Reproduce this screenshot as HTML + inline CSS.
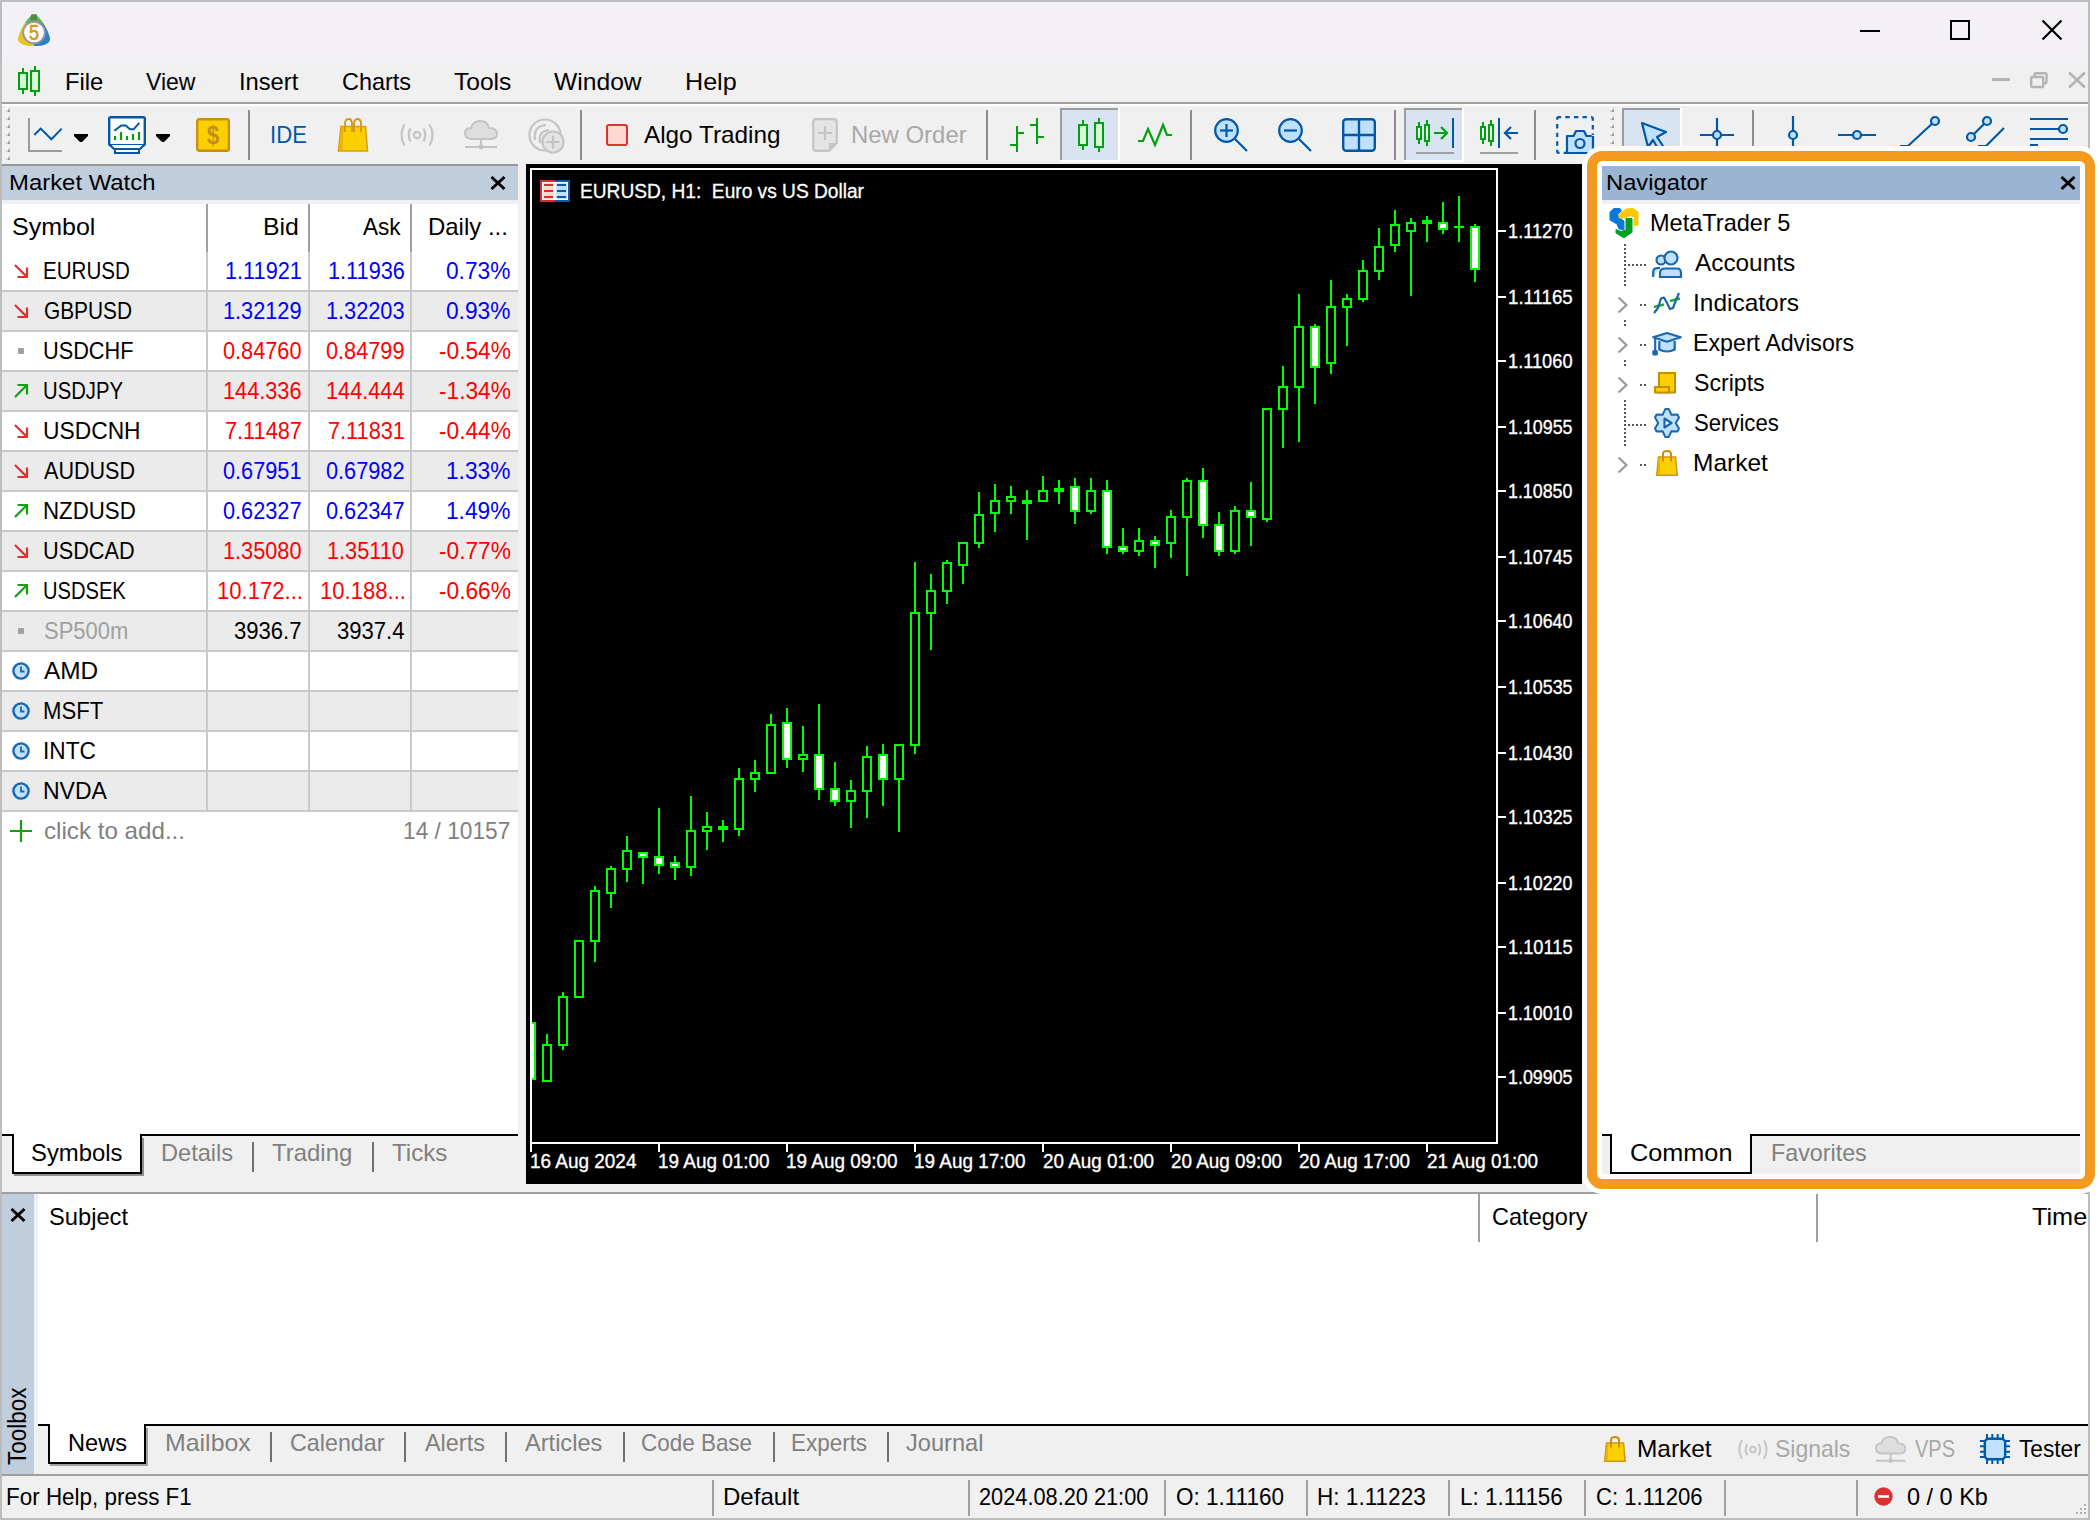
<!DOCTYPE html>
<html><head><meta charset="utf-8"><title>MetaTrader 5</title>
<style>
html,body{margin:0;padding:0;background:#fff;}
body{width:2100px;height:1520px;position:relative;overflow:hidden;font-family:"Liberation Sans",sans-serif;}
.t{position:absolute;white-space:pre;transform-origin:0 0;}
</style></head><body>
<div style="position:absolute;left:0px;top:0px;width:2090px;height:1520px;background:#f0f0f0;box-sizing:border-box;border:2px solid #bdbdbd;"></div>
<div style="position:absolute;left:2px;top:2px;width:2086px;height:60px;background:#f3f1f6;"></div>
<svg style="position:absolute;left:18px;top:14px;overflow:visible" width="32" height="32" viewBox="0 0 32 32" ><defs><clipPath id="cg"><rect x="0" y="0" width="32" height="9"/></clipPath><clipPath id="cy"><polygon points="0,9 9,9 16,20 16,32 0,32"/></clipPath><clipPath id="cb"><polygon points="32,9 23,9 16,20 16,32 32,32"/></clipPath></defs>
<path id="tri" d="M16 0 C21 1 30 15 32 24 C32.500 30 26 32 16 32 C6 32 -0.5 30 0 24 C2 15 11 1 16 0Z" fill="#58b858" clip-path="url(#cg)"/>
<path d="M16 0 C21 1 30 15 32 24 C32.500 30 26 32 16 32 C6 32 -0.5 30 0 24 C2 15 11 1 16 0Z" fill="#e8c428" clip-path="url(#cy)"/>
<path d="M16 0 C21 1 30 15 32 24 C32.500 30 26 32 16 32 C6 32 -0.5 30 0 24 C2 15 11 1 16 0Z" fill="#2c80c8" clip-path="url(#cb)"/>
<rect x="13" y="0.5" width="6" height="6" fill="#4c8c3c"/>
<circle cx="16" cy="18.500" r="10.800" fill="#fff" stroke="#989898" stroke-width="1.9"/>
<text x="0" y="0" transform="translate(16,26) scale(0.82,1)" font-size="22" text-anchor="middle" fill="#d8981c" stroke="#d8981c" stroke-width="0.7" font-family="Liberation Sans, sans-serif">5</text></svg>
<div style="position:absolute;left:1860px;top:30px;width:20px;height:2px;background:#000;"></div>
<div style="position:absolute;left:1950px;top:20px;width:20px;height:20px;background:transparent;box-sizing:border-box;border:2px solid #000;"></div>
<svg style="position:absolute;left:2042px;top:20px;overflow:visible" width="20" height="20" viewBox="0 0 20 20" ><path d="M0.5 0.5 L19.5 19.5 M19.5 0.5 L0.5 19.5" stroke="#000" stroke-width="2.2" fill="none"/></svg>
<div style="position:absolute;left:1992px;top:78px;width:18px;height:3px;background:#b4b4b4;"></div>
<svg style="position:absolute;left:2030px;top:72px;overflow:visible" width="18" height="16" viewBox="0 0 18 16" ><rect x="4.5" y="1.2" width="12" height="10" rx="1.5" fill="none" stroke="#b4b4b4" stroke-width="2.4"/><rect x="1.2" y="5" width="12" height="10" rx="1" fill="#f0f0f0" stroke="#b4b4b4" stroke-width="2.4"/></svg>
<svg style="position:absolute;left:2068px;top:72px;overflow:visible" width="18" height="16" viewBox="0 0 18 16" ><path d="M1 0.5 L17 15.5 M17 0.5 L1 15.5" stroke="#b4b4b4" stroke-width="2.6" fill="none"/></svg>
<svg style="position:absolute;left:18px;top:66px;overflow:visible" width="22" height="30" viewBox="0 0 22 30" >
<rect x="4" y="2" width="2" height="26" fill="#00a010"/><rect x="16" y="0" width="2" height="30" fill="#00a010"/>
<rect x="1" y="7" width="8" height="16" fill="#d8f8d8" stroke="#00a010" stroke-width="2"/>
<rect x="13" y="5" width="8" height="20" fill="#d8f8d8" stroke="#00a010" stroke-width="2"/></svg>
<div class="t" style="left:65.10px;top:69.68px;font-size:24px;line-height:24px;color:#000;transform:scaleX(0.9899)">File</div>
<div class="t" style="left:146.48px;top:69.68px;font-size:24px;line-height:24px;color:#000;transform:scaleX(0.9596)">View</div>
<div class="t" style="left:238.87px;top:69.68px;font-size:24px;line-height:24px;color:#000;transform:scaleX(0.9875)">Insert</div>
<div class="t" style="left:341.83px;top:69.68px;font-size:24px;line-height:24px;color:#000;transform:scaleX(0.9761)">Charts</div>
<div class="t" style="left:453.51px;top:69.68px;font-size:24px;line-height:24px;color:#000;transform:scaleX(1.0234)">Tools</div>
<div class="t" style="left:554.28px;top:69.68px;font-size:24px;line-height:24px;color:#000;transform:scaleX(1.0267)">Window</div>
<div class="t" style="left:684.99px;top:69.68px;font-size:24px;line-height:24px;color:#000;transform:scaleX(1.0465)">Help</div>
<div style="position:absolute;left:2px;top:102px;width:2086px;height:2px;background:#a0a0a0;"></div>
<div style="position:absolute;left:2px;top:104px;width:2086px;height:2px;background:#fff;"></div>
<div style="position:absolute;left:6px;top:108px;width:4px;height:4px;background:#fbfbfb;"></div>
<div style="position:absolute;left:8px;top:108px;width:2px;height:2px;background:#cfcfcf;"></div>
<div style="position:absolute;left:6px;top:110px;width:2px;height:2px;background:#cfcfcf;"></div>
<div style="position:absolute;left:8px;top:110px;width:2px;height:2px;background:#9c9c9c;"></div>
<div style="position:absolute;left:6px;top:116px;width:4px;height:4px;background:#fbfbfb;"></div>
<div style="position:absolute;left:8px;top:116px;width:2px;height:2px;background:#cfcfcf;"></div>
<div style="position:absolute;left:6px;top:118px;width:2px;height:2px;background:#cfcfcf;"></div>
<div style="position:absolute;left:8px;top:118px;width:2px;height:2px;background:#9c9c9c;"></div>
<div style="position:absolute;left:6px;top:124px;width:4px;height:4px;background:#fbfbfb;"></div>
<div style="position:absolute;left:8px;top:124px;width:2px;height:2px;background:#cfcfcf;"></div>
<div style="position:absolute;left:6px;top:126px;width:2px;height:2px;background:#cfcfcf;"></div>
<div style="position:absolute;left:8px;top:126px;width:2px;height:2px;background:#9c9c9c;"></div>
<div style="position:absolute;left:6px;top:132px;width:4px;height:4px;background:#fbfbfb;"></div>
<div style="position:absolute;left:8px;top:132px;width:2px;height:2px;background:#cfcfcf;"></div>
<div style="position:absolute;left:6px;top:134px;width:2px;height:2px;background:#cfcfcf;"></div>
<div style="position:absolute;left:8px;top:134px;width:2px;height:2px;background:#9c9c9c;"></div>
<div style="position:absolute;left:6px;top:140px;width:4px;height:4px;background:#fbfbfb;"></div>
<div style="position:absolute;left:8px;top:140px;width:2px;height:2px;background:#cfcfcf;"></div>
<div style="position:absolute;left:6px;top:142px;width:2px;height:2px;background:#cfcfcf;"></div>
<div style="position:absolute;left:8px;top:142px;width:2px;height:2px;background:#9c9c9c;"></div>
<div style="position:absolute;left:6px;top:148px;width:4px;height:4px;background:#fbfbfb;"></div>
<div style="position:absolute;left:8px;top:148px;width:2px;height:2px;background:#cfcfcf;"></div>
<div style="position:absolute;left:6px;top:150px;width:2px;height:2px;background:#cfcfcf;"></div>
<div style="position:absolute;left:8px;top:150px;width:2px;height:2px;background:#9c9c9c;"></div>
<div style="position:absolute;left:6px;top:156px;width:4px;height:4px;background:#fbfbfb;"></div>
<div style="position:absolute;left:8px;top:156px;width:2px;height:2px;background:#cfcfcf;"></div>
<div style="position:absolute;left:6px;top:158px;width:2px;height:2px;background:#cfcfcf;"></div>
<div style="position:absolute;left:8px;top:158px;width:2px;height:2px;background:#9c9c9c;"></div>
<div style="position:absolute;left:1610px;top:108px;width:4px;height:4px;background:#fbfbfb;"></div>
<div style="position:absolute;left:1612px;top:108px;width:2px;height:2px;background:#cfcfcf;"></div>
<div style="position:absolute;left:1610px;top:110px;width:2px;height:2px;background:#cfcfcf;"></div>
<div style="position:absolute;left:1612px;top:110px;width:2px;height:2px;background:#9c9c9c;"></div>
<div style="position:absolute;left:1610px;top:116px;width:4px;height:4px;background:#fbfbfb;"></div>
<div style="position:absolute;left:1612px;top:116px;width:2px;height:2px;background:#cfcfcf;"></div>
<div style="position:absolute;left:1610px;top:118px;width:2px;height:2px;background:#cfcfcf;"></div>
<div style="position:absolute;left:1612px;top:118px;width:2px;height:2px;background:#9c9c9c;"></div>
<div style="position:absolute;left:1610px;top:124px;width:4px;height:4px;background:#fbfbfb;"></div>
<div style="position:absolute;left:1612px;top:124px;width:2px;height:2px;background:#cfcfcf;"></div>
<div style="position:absolute;left:1610px;top:126px;width:2px;height:2px;background:#cfcfcf;"></div>
<div style="position:absolute;left:1612px;top:126px;width:2px;height:2px;background:#9c9c9c;"></div>
<div style="position:absolute;left:1610px;top:132px;width:4px;height:4px;background:#fbfbfb;"></div>
<div style="position:absolute;left:1612px;top:132px;width:2px;height:2px;background:#cfcfcf;"></div>
<div style="position:absolute;left:1610px;top:134px;width:2px;height:2px;background:#cfcfcf;"></div>
<div style="position:absolute;left:1612px;top:134px;width:2px;height:2px;background:#9c9c9c;"></div>
<div style="position:absolute;left:1610px;top:140px;width:4px;height:4px;background:#fbfbfb;"></div>
<div style="position:absolute;left:1612px;top:140px;width:2px;height:2px;background:#cfcfcf;"></div>
<div style="position:absolute;left:1610px;top:142px;width:2px;height:2px;background:#cfcfcf;"></div>
<div style="position:absolute;left:1612px;top:142px;width:2px;height:2px;background:#9c9c9c;"></div>
<div style="position:absolute;left:248px;top:110px;width:2px;height:50px;background:#8c8c8c;"></div>
<div style="position:absolute;left:580px;top:110px;width:2px;height:50px;background:#8c8c8c;"></div>
<div style="position:absolute;left:986px;top:110px;width:2px;height:50px;background:#8c8c8c;"></div>
<div style="position:absolute;left:1190px;top:110px;width:2px;height:50px;background:#8c8c8c;"></div>
<div style="position:absolute;left:1394px;top:110px;width:2px;height:50px;background:#8c8c8c;"></div>
<div style="position:absolute;left:1534px;top:110px;width:2px;height:50px;background:#8c8c8c;"></div>
<div style="position:absolute;left:1752px;top:110px;width:2px;height:50px;background:#8c8c8c;"></div>
<svg style="position:absolute;left:28px;top:116px;overflow:visible" width="36" height="38" viewBox="0 0 36 38" ><path d="M1 2 V35 H34" fill="none" stroke="#9a9a9a" stroke-width="2"/><path d="M6.3 19 L12.700 12.600 L23.400 23.300 L33.700 12.600" fill="none" stroke="#0058a8" stroke-width="2"/></svg>
<svg style="position:absolute;left:74px;top:134px;overflow:visible" width="14" height="8" viewBox="0 0 14 8" ><path d="M0 0 H14 V2 L8 8 H6 L0 2Z" fill="#000"/></svg>
<svg style="position:absolute;left:156px;top:134px;overflow:visible" width="14" height="8" viewBox="0 0 14 8" ><path d="M0 0 H14 V2 L8 8 H6 L0 2Z" fill="#000"/></svg>
<svg style="position:absolute;left:108px;top:116px;overflow:visible" width="38" height="38" viewBox="0 0 38 38" ><rect x="1.2" y="1.2" width="35.6" height="28" rx="1.5" fill="#fff" stroke="#0058a8" stroke-width="2.4"/>
<path d="M2 29 L6 33 H32 L36 29" fill="#fff" stroke="#0058a8" stroke-width="2.2"/>
<rect x="7" y="33" width="24" height="4" fill="#fff" stroke="#0058a8" stroke-width="2"/>
<path d="M6.3 14.700 L13.400 9.4 L17.700 9.4 L22 13.300 L25.600 13.300 L31.300 6.9" fill="none" stroke="#0058a8" stroke-width="2"/>
<path d="M7 24 V20 M13 24 V16 M19 24 V20 M25 24 V18 M31 24 V16" stroke="#00a010" stroke-width="2.2"/></svg>
<svg style="position:absolute;left:196px;top:118px;overflow:visible" width="34" height="34" viewBox="0 0 34 34" ><rect x="1.2" y="1.2" width="31.6" height="31.6" rx="2" fill="#fcd000" stroke="#c89010" stroke-width="2.4"/>
<text x="0" y="0" transform="translate(17,26) scale(0.9,1)" font-size="25" font-weight="bold" text-anchor="middle" fill="#c09018" font-family="Liberation Sans, sans-serif">$</text></svg>
<div class="t" style="left:270.01px;top:123.38px;font-size:24px;line-height:24px;color:#0058a8;transform:scaleX(0.9229)">IDE</div>
<svg style="position:absolute;left:338px;top:118px;overflow:visible" width="30.0" height="34.0" viewBox="0 0 30.0 34.0" ><g transform="scale(1.0)"><path d="M3 8.5 H27.500 L29.500 33 H0.5Z" fill="#fcd000" stroke="#d8a010" stroke-width="1.6"/><path d="M3 9.5 L1.5 32 H4.500 L5.5 9.500Z" fill="#e8b408"/>
<path d="M7 14 V6 Q7 1 10.500 1 Q14 1 14 6 V14 M16 14 V6 Q16 1 19.500 1 Q23 1 23 6 V14" fill="none" stroke="#d09810" stroke-width="1.8"/></g></svg>
<svg style="position:absolute;left:400px;top:123px;overflow:visible" width="34.0" height="24.0" viewBox="0 0 34.0 24.0" ><g transform="scale(1.0)" fill="none" stroke="#c4c4c4" stroke-width="2.2"><circle cx="17" cy="12" r="3.2"/>
<path d="M10.5 5.5 Q7 12 10.5 18.5 M23.5 5.5 Q27 12 23.5 18.5 M4.5 1.5 Q-1.5 12 4.5 22.5 M29.5 1.5 Q35.500 12 29.5 22.5"/></g></svg>
<svg style="position:absolute;left:464px;top:120px;overflow:visible" width="34.0" height="30.0" viewBox="0 0 34.0 30.0" ><g transform="scale(1.0)"><path d="M8 19 Q1 19 1 13 Q1 8 7 8 Q9 1 16 1 Q24 1 25 8 Q33 8 33 14 Q33 19 26 19Z" fill="#dedede" stroke="#c4c4c4" stroke-width="2"/>
<path d="M17 19 V27 M1 27 H33" stroke="#c4c4c4" stroke-width="2.2" fill="none"/><circle cx="17" cy="27" r="2.4" fill="#c4c4c4"/></g></svg>
<svg style="position:absolute;left:528px;top:118px;overflow:visible" width="37" height="36" viewBox="0 0 37 36" ><g fill="none" stroke="#c4c4c4" stroke-width="2.2"><circle cx="17" cy="17" r="15.5"/><path d="M7 22 Q5 8 18 7 M12 25 Q10 13 21 12"/>
<circle cx="25" cy="24" r="10.5" fill="#e4e4e4"/><path d="M25 17.5 V30.5 M18.5 24 H31.500"/></g></svg>
<div style="position:absolute;left:606px;top:124px;width:22px;height:22px;background:#ffd8d0;box-sizing:border-box;border:2px solid #e03030;border-radius:3px;"></div>
<div class="t" style="left:644.20px;top:123.38px;font-size:24px;line-height:24px;color:#000;transform:scaleX(1.0126)">Algo Trading</div>
<svg style="position:absolute;left:812px;top:118px;overflow:visible" width="26" height="34" viewBox="0 0 26 34" ><path d="M4 1.2 H22 Q24.800 1.2 24.800 4 V25 L17 32.800 H4 Q1.2 32.800 1.2 30 V4 Q1.2 1.2 4 1.2Z" fill="#e4e4e4" stroke="#c4c4c4" stroke-width="2.2"/>
<path d="M17 32 V25 H24.500Z" fill="#c4c4c4"/><path d="M13 8 V22 M6 15 H20" stroke="#c4c4c4" stroke-width="2.2"/></svg>
<div class="t" style="left:851.39px;top:123.38px;font-size:24px;line-height:24px;color:#a8a8a8;transform:scaleX(0.9968)">New Order</div>
<svg style="position:absolute;left:1010px;top:118px;overflow:visible" width="34" height="34" viewBox="0 0 34 34" ><g fill="#00a010"><rect x="6" y="8" width="2" height="26"/><rect x="0" y="26" width="7" height="2"/><rect x="7" y="14" width="7" height="2"/><rect x="26" y="0" width="2" height="26"/><rect x="20" y="6" width="7" height="2"/><rect x="27" y="18" width="7" height="2"/></g></svg>
<div style="position:absolute;left:1060px;top:108px;width:58px;height:52px;background:#d8e4f2;"></div>
<div style="position:absolute;left:1060px;top:108px;width:58px;height:2px;background:#9c9c9c;"></div>
<div style="position:absolute;left:1060px;top:108px;width:2px;height:52px;background:#9c9c9c;"></div>
<div style="position:absolute;left:1060px;top:160px;width:60px;height:2px;background:#fff;"></div>
<div style="position:absolute;left:1118px;top:108px;width:2px;height:54px;background:#fff;"></div>
<svg style="position:absolute;left:1078px;top:118px;overflow:visible" width="28" height="34" viewBox="0 0 28 34" ><rect x="4" y="2" width="2" height="30" fill="#00a010"/><rect x="20" y="0" width="2" height="34" fill="#00a010"/>
<rect x="1" y="7" width="8" height="20" fill="#d8f8d8" stroke="#00a010" stroke-width="2"/><rect x="17" y="5" width="8" height="24" fill="#d8f8d8" stroke="#00a010" stroke-width="2"/></svg>
<svg style="position:absolute;left:1138px;top:124px;overflow:visible" width="34" height="22" viewBox="0 0 34 22" ><path d="M0 17 H5 L10 5 L17 21 L25 1 L29 11 H34" fill="none" stroke="#00a010" stroke-width="2.2"/></svg>
<svg style="position:absolute;left:1214px;top:118px;overflow:visible" width="34" height="34" viewBox="0 0 34 34" ><g fill="none" stroke="#0058a8" stroke-width="2.2"><circle cx="12.500" cy="12.500" r="11.3" fill="#c0e0ff"/><path d="M6 12.500 H19"/><path d="M12.500 6 V19" /><path d="M21 21 L33 33"/></g></svg>
<svg style="position:absolute;left:1278px;top:118px;overflow:visible" width="34" height="34" viewBox="0 0 34 34" ><g fill="none" stroke="#0058a8" stroke-width="2.2"><circle cx="12.500" cy="12.500" r="11.3" fill="#c0e0ff"/><path d="M6 12.500 H19"/><path d="M21 21 L33 33"/></g></svg>
<svg style="position:absolute;left:1342px;top:118px;overflow:visible" width="34" height="34" viewBox="0 0 34 34" ><rect x="1.2" y="1.2" width="31.6" height="31.6" rx="3" fill="#c0e0ff" stroke="#0058a8" stroke-width="2.4"/><path d="M17 1 V33 M1 17 H33" stroke="#0058a8" stroke-width="2.4"/></svg>
<div style="position:absolute;left:1404px;top:108px;width:58px;height:52px;background:#d8e4f2;"></div>
<div style="position:absolute;left:1404px;top:108px;width:58px;height:2px;background:#9c9c9c;"></div>
<div style="position:absolute;left:1404px;top:108px;width:2px;height:52px;background:#9c9c9c;"></div>
<div style="position:absolute;left:1404px;top:160px;width:60px;height:2px;background:#fff;"></div>
<div style="position:absolute;left:1462px;top:108px;width:2px;height:54px;background:#fff;"></div>
<svg style="position:absolute;left:1416px;top:118px;overflow:visible" width="38" height="36" viewBox="0 0 38 36" ><g transform="translate(0,0)"><rect x="2" y="4" width="2" height="22" fill="#00a010"/><rect x="10" y="2" width="2" height="26" fill="#00a010"/>
<rect x="1" y="9" width="4" height="12" fill="#e8ffe8" stroke="#00a010" stroke-width="2"/><rect x="9" y="7" width="4" height="16" fill="#e8ffe8" stroke="#00a010" stroke-width="2"/></g><path d="M18 15 H31 M25 9 L31 15 L25 21" fill="none" stroke="#00a010" stroke-width="2.2"/><rect x="36" y="0" width="2" height="30" fill="#0058a8"/><rect x="0" y="34" width="38" height="2" fill="#a0a0a0"/></svg>
<svg style="position:absolute;left:1480px;top:118px;overflow:visible" width="38" height="36" viewBox="0 0 38 36" ><g transform="translate(0,0)"><rect x="2" y="4" width="2" height="22" fill="#00a010"/><rect x="10" y="2" width="2" height="26" fill="#00a010"/>
<rect x="1" y="9" width="4" height="12" fill="#e8ffe8" stroke="#00a010" stroke-width="2"/><rect x="9" y="7" width="4" height="16" fill="#e8ffe8" stroke="#00a010" stroke-width="2"/></g><rect x="18" y="0" width="2" height="30" fill="#0058a8"/><path d="M38 15 H25 M31 9 L25 15 L31 21" fill="none" stroke="#0058a8" stroke-width="2.2"/><rect x="0" y="34" width="38" height="2" fill="#a0a0a0"/></svg>
<svg style="position:absolute;left:1556px;top:116px;overflow:visible" width="38" height="38" viewBox="0 0 38 38" ><rect x="1.2" y="1.2" width="35.6" height="35.6" rx="1.5" fill="none" stroke="#0058a8" stroke-width="2.2" stroke-dasharray="4.4 4.2" stroke-dashoffset="2"/>
<path d="M11 20 H17.500 L20 15 H28 L30.500 20 H37 V37 H11Z" fill="#c0e0ff" stroke="#0058a8" stroke-width="2.2" stroke-linejoin="round"/><rect x="35.800" y="19" width="3" height="19.200" fill="#f0f0f0"/><path d="M37 20 V37" stroke="#0058a8" stroke-width="2.2"/><circle cx="24" cy="27.500" r="4.500" fill="none" stroke="#0058a8" stroke-width="2.2"/></svg>
<div style="position:absolute;left:1622px;top:108px;width:58px;height:52px;background:#d8e4f2;"></div>
<div style="position:absolute;left:1622px;top:108px;width:58px;height:2px;background:#9c9c9c;"></div>
<div style="position:absolute;left:1622px;top:108px;width:2px;height:52px;background:#9c9c9c;"></div>
<div style="position:absolute;left:1622px;top:160px;width:60px;height:2px;background:#fff;"></div>
<div style="position:absolute;left:1680px;top:108px;width:2px;height:54px;background:#fff;"></div>
<svg style="position:absolute;left:1640px;top:122px;overflow:visible" width="28" height="30" viewBox="0 0 28 30" ><path d="M2 1 L26 10 L17 15 L25 27 L20 30 L13 18 L8 25Z" fill="#c0e0ff" stroke="#0058a8" stroke-width="2.2" stroke-linejoin="round"/></svg>
<svg style="position:absolute;left:1700px;top:118px;overflow:visible" width="34" height="34" viewBox="0 0 34 34" ><path d="M17 0 V34 M0 17 H34" stroke="#0058a8" stroke-width="2.2"/><circle cx="17" cy="17" r="4" fill="#c0e0ff" stroke="#0058a8" stroke-width="2.2"/></svg>
<svg style="position:absolute;left:1787px;top:116px;overflow:visible" width="12" height="38" viewBox="0 0 12 38" ><path d="M6 0 V38" stroke="#0058a8" stroke-width="2.2"/><circle cx="6" cy="19" r="4" fill="#c0e0ff" stroke="#0058a8" stroke-width="2.2"/></svg>
<svg style="position:absolute;left:1838px;top:129px;overflow:visible" width="38" height="12" viewBox="0 0 38 12" ><path d="M0 6 H38" stroke="#0058a8" stroke-width="2.2"/><circle cx="19" cy="6" r="4" fill="#c0e0ff" stroke="#0058a8" stroke-width="2.2"/></svg>
<svg style="position:absolute;left:1900px;top:116px;overflow:visible" width="40" height="38" viewBox="0 0 40 38" ><path d="M0 30 H8 L35 5" fill="none" stroke="#0058a8" stroke-width="2.2"/><circle cx="35" cy="5" r="4" fill="#c0e0ff" stroke="#0058a8" stroke-width="2.2"/></svg>
<svg style="position:absolute;left:1964px;top:116px;overflow:visible" width="44" height="38" viewBox="0 0 44 38" ><path d="M7 21 L23 5 M14 30 H22 L40 12" fill="none" stroke="#0058a8" stroke-width="2.2"/><circle cx="7" cy="21" r="4" fill="#c0e0ff" stroke="#0058a8" stroke-width="2.2"/><circle cx="23" cy="5" r="4" fill="#c0e0ff" stroke="#0058a8" stroke-width="2.2"/></svg>
<svg style="position:absolute;left:2030px;top:116px;overflow:visible" width="40" height="38" viewBox="0 0 40 38" ><path d="M0 3 H38 M0 13 H30 M0 23 H38 M0 29 H8" stroke="#0058a8" stroke-width="2.2"/><circle cx="33" cy="13" r="4" fill="#c0e0ff" stroke="#0058a8" stroke-width="2.2"/></svg>
<div style="position:absolute;left:2px;top:164px;width:516px;height:2px;background:#9a9a9a;"></div>
<div style="position:absolute;left:2px;top:166px;width:516px;height:34px;background:#c0cddc;"></div>
<div style="position:absolute;left:2px;top:200px;width:516px;height:4px;background:#f0f0f0;"></div>
<div style="position:absolute;left:2px;top:204px;width:516px;height:930px;background:#fff;"></div>
<div class="t" style="left:8.59px;top:173.40px;font-size:21.5px;line-height:21.5px;color:#000;transform:scaleX(1.1113)">Market Watch</div>
<svg style="position:absolute;left:490px;top:176px;overflow:visible" width="16" height="14" viewBox="0 0 16 14" ><path d="M1.5 1 L14.500 13 M14.500 1 L1.5 13" stroke="#000" stroke-width="3" fill="none"/></svg>
<div style="position:absolute;left:2px;top:290px;width:516px;height:2px;background:#c8c8c8;"></div>
<div style="position:absolute;left:2px;top:292px;width:516px;height:38px;background:#ebebeb;"></div>
<div style="position:absolute;left:2px;top:330px;width:516px;height:2px;background:#c8c8c8;"></div>
<div style="position:absolute;left:2px;top:370px;width:516px;height:2px;background:#c8c8c8;"></div>
<div style="position:absolute;left:2px;top:372px;width:516px;height:38px;background:#ebebeb;"></div>
<div style="position:absolute;left:2px;top:410px;width:516px;height:2px;background:#c8c8c8;"></div>
<div style="position:absolute;left:2px;top:450px;width:516px;height:2px;background:#c8c8c8;"></div>
<div style="position:absolute;left:2px;top:452px;width:516px;height:38px;background:#ebebeb;"></div>
<div style="position:absolute;left:2px;top:490px;width:516px;height:2px;background:#c8c8c8;"></div>
<div style="position:absolute;left:2px;top:530px;width:516px;height:2px;background:#c8c8c8;"></div>
<div style="position:absolute;left:2px;top:532px;width:516px;height:38px;background:#ebebeb;"></div>
<div style="position:absolute;left:2px;top:570px;width:516px;height:2px;background:#c8c8c8;"></div>
<div style="position:absolute;left:2px;top:610px;width:516px;height:2px;background:#c8c8c8;"></div>
<div style="position:absolute;left:2px;top:612px;width:516px;height:38px;background:#ebebeb;"></div>
<div style="position:absolute;left:2px;top:650px;width:516px;height:2px;background:#c8c8c8;"></div>
<div style="position:absolute;left:2px;top:690px;width:516px;height:2px;background:#c8c8c8;"></div>
<div style="position:absolute;left:2px;top:692px;width:516px;height:38px;background:#ebebeb;"></div>
<div style="position:absolute;left:2px;top:730px;width:516px;height:2px;background:#c8c8c8;"></div>
<div style="position:absolute;left:2px;top:770px;width:516px;height:2px;background:#c8c8c8;"></div>
<div style="position:absolute;left:2px;top:772px;width:516px;height:38px;background:#ebebeb;"></div>
<div style="position:absolute;left:2px;top:810px;width:516px;height:2px;background:#c8c8c8;"></div>
<div style="position:absolute;left:206px;top:204px;width:2px;height:48px;background:#a0a0a0;"></div>
<div style="position:absolute;left:206px;top:252px;width:2px;height:560px;background:#c8c8c8;"></div>
<div style="position:absolute;left:308px;top:204px;width:2px;height:48px;background:#a0a0a0;"></div>
<div style="position:absolute;left:308px;top:252px;width:2px;height:560px;background:#c8c8c8;"></div>
<div style="position:absolute;left:410px;top:204px;width:2px;height:48px;background:#a0a0a0;"></div>
<div style="position:absolute;left:410px;top:252px;width:2px;height:560px;background:#c8c8c8;"></div>
<div class="t" style="left:12.47px;top:215.18px;font-size:24px;line-height:24px;color:#000;transform:scaleX(1.0417)">Symbol</div>
<div class="t" style="left:262.71px;top:215.18px;font-size:24px;line-height:24px;color:#000;transform:scaleX(1.0345)">Bid</div>
<div class="t" style="left:362.60px;top:215.18px;font-size:24px;line-height:24px;color:#000;transform:scaleX(0.9409)">Ask</div>
<div class="t" style="left:427.78px;top:215.18px;font-size:24px;line-height:24px;color:#000;transform:scaleX(0.9979)">Daily ...</div>
<svg style="position:absolute;left:14px;top:264px;overflow:visible" width="14" height="14" viewBox="0 0 14 14" ><path d="M1 1 L12 12 M3.5 13 H13 V3.5" fill="none" stroke="#e03030" stroke-width="2.2"/></svg>
<div class="t" style="left:42.96px;top:259.48px;font-size:24px;line-height:24px;color:#000;transform:scaleX(0.8567)">EURUSD</div>
<div class="t" style="left:224.69px;top:259.48px;font-size:24px;line-height:24px;color:#0000ff;transform:scaleX(0.9050)">1.11921</div>
<div class="t" style="left:327.58px;top:259.48px;font-size:24px;line-height:24px;color:#0000ff;transform:scaleX(0.9050)">1.11936</div>
<div class="t" style="left:446.30px;top:259.48px;font-size:24px;line-height:24px;color:#0000ff;transform:scaleX(0.9450)">0.73%</div>
<svg style="position:absolute;left:14px;top:304px;overflow:visible" width="14" height="14" viewBox="0 0 14 14" ><path d="M1 1 L12 12 M3.5 13 H13 V3.5" fill="none" stroke="#e03030" stroke-width="2.2"/></svg>
<div class="t" style="left:43.96px;top:299.48px;font-size:24px;line-height:24px;color:#000;transform:scaleX(0.8687)">GBPUSD</div>
<div class="t" style="left:223.06px;top:299.48px;font-size:24px;line-height:24px;color:#0000ff;transform:scaleX(0.9050)">1.32129</div>
<div class="t" style="left:325.95px;top:299.48px;font-size:24px;line-height:24px;color:#0000ff;transform:scaleX(0.9050)">1.32203</div>
<div class="t" style="left:446.30px;top:299.48px;font-size:24px;line-height:24px;color:#0000ff;transform:scaleX(0.9450)">0.93%</div>
<div style="position:absolute;left:18px;top:348px;width:6px;height:6px;background:#a0a0a0;border-radius:1px;"></div>
<div class="t" style="left:43.37px;top:339.48px;font-size:24px;line-height:24px;color:#000;transform:scaleX(0.9053)">USDCHF</div>
<div class="t" style="left:222.84px;top:339.48px;font-size:24px;line-height:24px;color:#ff0000;transform:scaleX(0.9050)">0.84760</div>
<div class="t" style="left:326.06px;top:339.48px;font-size:24px;line-height:24px;color:#ff0000;transform:scaleX(0.9050)">0.84799</div>
<div class="t" style="left:438.70px;top:339.48px;font-size:24px;line-height:24px;color:#ff0000;transform:scaleX(0.9450)">-0.54%</div>
<svg style="position:absolute;left:14px;top:384px;overflow:visible" width="14" height="14" viewBox="0 0 14 14" ><path d="M1 13 L12 2 M3.5 1 H13 V10.500" fill="none" stroke="#10a010" stroke-width="2.2"/></svg>
<div class="t" style="left:43.48px;top:379.48px;font-size:24px;line-height:24px;color:#000;transform:scaleX(0.8442)">USDJPY</div>
<div class="t" style="left:222.95px;top:379.48px;font-size:24px;line-height:24px;color:#ff0000;transform:scaleX(0.9050)">144.336</div>
<div class="t" style="left:325.63px;top:379.48px;font-size:24px;line-height:24px;color:#ff0000;transform:scaleX(0.9050)">144.444</div>
<div class="t" style="left:438.70px;top:379.48px;font-size:24px;line-height:24px;color:#ff0000;transform:scaleX(0.9450)">-1.34%</div>
<svg style="position:absolute;left:14px;top:424px;overflow:visible" width="14" height="14" viewBox="0 0 14 14" ><path d="M1 1 L12 12 M3.5 13 H13 V3.5" fill="none" stroke="#e03030" stroke-width="2.2"/></svg>
<div class="t" style="left:43.29px;top:419.48px;font-size:24px;line-height:24px;color:#000;transform:scaleX(0.9506)">USDCNH</div>
<div class="t" style="left:224.80px;top:419.48px;font-size:24px;line-height:24px;color:#ff0000;transform:scaleX(0.9050)">7.11487</div>
<div class="t" style="left:327.69px;top:419.48px;font-size:24px;line-height:24px;color:#ff0000;transform:scaleX(0.9050)">7.11831</div>
<div class="t" style="left:438.70px;top:419.48px;font-size:24px;line-height:24px;color:#ff0000;transform:scaleX(0.9450)">-0.44%</div>
<svg style="position:absolute;left:14px;top:464px;overflow:visible" width="14" height="14" viewBox="0 0 14 14" ><path d="M1 1 L12 12 M3.5 13 H13 V3.5" fill="none" stroke="#e03030" stroke-width="2.2"/></svg>
<div class="t" style="left:44.00px;top:459.48px;font-size:24px;line-height:24px;color:#000;transform:scaleX(0.8982)">AUDUSD</div>
<div class="t" style="left:223.06px;top:459.48px;font-size:24px;line-height:24px;color:#0000ff;transform:scaleX(0.9050)">0.67951</div>
<div class="t" style="left:326.17px;top:459.48px;font-size:24px;line-height:24px;color:#0000ff;transform:scaleX(0.9050)">0.67982</div>
<div class="t" style="left:446.30px;top:459.48px;font-size:24px;line-height:24px;color:#0000ff;transform:scaleX(0.9450)">1.33%</div>
<svg style="position:absolute;left:14px;top:504px;overflow:visible" width="14" height="14" viewBox="0 0 14 14" ><path d="M1 13 L12 2 M3.5 1 H13 V10.500" fill="none" stroke="#10a010" stroke-width="2.2"/></svg>
<div class="t" style="left:43.22px;top:499.48px;font-size:24px;line-height:24px;color:#000;transform:scaleX(0.9282)">NZDUSD</div>
<div class="t" style="left:223.17px;top:499.48px;font-size:24px;line-height:24px;color:#0000ff;transform:scaleX(0.9050)">0.62327</div>
<div class="t" style="left:326.17px;top:499.48px;font-size:24px;line-height:24px;color:#0000ff;transform:scaleX(0.9050)">0.62347</div>
<div class="t" style="left:446.30px;top:499.48px;font-size:24px;line-height:24px;color:#0000ff;transform:scaleX(0.9450)">1.49%</div>
<svg style="position:absolute;left:14px;top:544px;overflow:visible" width="14" height="14" viewBox="0 0 14 14" ><path d="M1 1 L12 12 M3.5 13 H13 V3.5" fill="none" stroke="#e03030" stroke-width="2.2"/></svg>
<div class="t" style="left:43.37px;top:539.48px;font-size:24px;line-height:24px;color:#000;transform:scaleX(0.9045)">USDCAD</div>
<div class="t" style="left:222.84px;top:539.48px;font-size:24px;line-height:24px;color:#ff0000;transform:scaleX(0.9050)">1.35080</div>
<div class="t" style="left:327.47px;top:539.48px;font-size:24px;line-height:24px;color:#ff0000;transform:scaleX(0.9050)">1.35110</div>
<div class="t" style="left:438.70px;top:539.48px;font-size:24px;line-height:24px;color:#ff0000;transform:scaleX(0.9450)">-0.77%</div>
<svg style="position:absolute;left:14px;top:584px;overflow:visible" width="14" height="14" viewBox="0 0 14 14" ><path d="M1 13 L12 2 M3.5 1 H13 V10.500" fill="none" stroke="#10a010" stroke-width="2.2"/></svg>
<div class="t" style="left:43.49px;top:579.48px;font-size:24px;line-height:24px;color:#000;transform:scaleX(0.8385)">USDSEK</div>
<div class="t" style="left:216.59px;top:579.48px;font-size:24px;line-height:24px;color:#ff0000;transform:scaleX(0.9200)">10.172...</div>
<div class="t" style="left:319.59px;top:579.48px;font-size:24px;line-height:24px;color:#ff0000;transform:scaleX(0.9200)">10.188...</div>
<div class="t" style="left:438.70px;top:579.48px;font-size:24px;line-height:24px;color:#ff0000;transform:scaleX(0.9450)">-0.66%</div>
<div style="position:absolute;left:18px;top:628px;width:6px;height:6px;background:#a0a0a0;border-radius:1px;"></div>
<div class="t" style="left:44.01px;top:619.48px;font-size:24px;line-height:24px;color:#a0a0a0;transform:scaleX(0.9160)">SP500m</div>
<div class="t" style="left:234.14px;top:619.48px;font-size:24px;line-height:24px;color:#000;transform:scaleX(0.9200)">3936.7</div>
<div class="t" style="left:336.59px;top:619.48px;font-size:24px;line-height:24px;color:#000;transform:scaleX(0.9200)">3937.4</div>
<svg style="position:absolute;left:12px;top:662px;overflow:visible" width="18" height="18" viewBox="0 0 18 18" ><circle cx="9" cy="9" r="7.6" fill="#c0e0ff" stroke="#1868b0" stroke-width="2.4"/><path d="M9 4.500 V9.5 H12.500" fill="none" stroke="#1868b0" stroke-width="1.8"/></svg>
<div class="t" style="left:44.00px;top:659.48px;font-size:24px;line-height:24px;color:#000;transform:scaleX(1.0153)">AMD</div>
<svg style="position:absolute;left:12px;top:702px;overflow:visible" width="18" height="18" viewBox="0 0 18 18" ><circle cx="9" cy="9" r="7.6" fill="#c0e0ff" stroke="#1868b0" stroke-width="2.4"/><path d="M9 4.500 V9.5 H12.500" fill="none" stroke="#1868b0" stroke-width="1.8"/></svg>
<div class="t" style="left:43.23px;top:699.48px;font-size:24px;line-height:24px;color:#000;transform:scaleX(0.9224)">MSFT</div>
<svg style="position:absolute;left:12px;top:742px;overflow:visible" width="18" height="18" viewBox="0 0 18 18" ><circle cx="9" cy="9" r="7.6" fill="#c0e0ff" stroke="#1868b0" stroke-width="2.4"/><path d="M9 4.500 V9.5 H12.500" fill="none" stroke="#1868b0" stroke-width="1.8"/></svg>
<div class="t" style="left:42.96px;top:739.48px;font-size:24px;line-height:24px;color:#000;transform:scaleX(0.9448)">INTC</div>
<svg style="position:absolute;left:12px;top:782px;overflow:visible" width="18" height="18" viewBox="0 0 18 18" ><circle cx="9" cy="9" r="7.6" fill="#c0e0ff" stroke="#1868b0" stroke-width="2.4"/><path d="M9 4.500 V9.5 H12.500" fill="none" stroke="#1868b0" stroke-width="1.8"/></svg>
<div class="t" style="left:43.16px;top:779.48px;font-size:24px;line-height:24px;color:#000;transform:scaleX(0.9586)">NVDA</div>
<svg style="position:absolute;left:10px;top:820px;overflow:visible" width="22" height="22" viewBox="0 0 22 22" ><path d="M11 0 V22 M0 11 H22" stroke="#10a010" stroke-width="2.2"/></svg>
<div class="t" style="left:44.03px;top:819.48px;font-size:24px;line-height:24px;color:#808080;transform:scaleX(1.0070)">click to add...</div>
<div class="t" style="left:403.30px;top:819.48px;font-size:24px;line-height:24px;color:#808080;transform:scaleX(0.9466)">14 / 10157</div>
<div style="position:absolute;left:2px;top:1136px;width:516px;height:56px;background:#f0f0f0;"></div>
<div style="position:absolute;left:2px;top:1134px;width:12px;height:2px;background:#000;"></div>
<div style="position:absolute;left:140px;top:1134px;width:378px;height:2px;background:#000;"></div>
<div style="position:absolute;left:12px;top:1134px;width:130px;height:38px;background:#fff;"></div>
<div style="position:absolute;left:12px;top:1134px;width:2px;height:40px;background:#000;"></div>
<div style="position:absolute;left:140px;top:1134px;width:2px;height:40px;background:#000;"></div>
<div style="position:absolute;left:12px;top:1172px;width:130px;height:2px;background:#000;"></div>
<div style="position:absolute;left:14px;top:1174px;width:130px;height:2px;background:#909090;"></div>
<div style="position:absolute;left:142px;top:1138px;width:2px;height:38px;background:#909090;"></div>
<div class="t" style="left:30.93px;top:1141.38px;font-size:24px;line-height:24px;color:#000;transform:scaleX(0.9942)">Symbols</div>
<div class="t" style="left:160.91px;top:1141.38px;font-size:24px;line-height:24px;color:#808080;transform:scaleX(0.9836)">Details</div>
<div class="t" style="left:272.12px;top:1141.38px;font-size:24px;line-height:24px;color:#808080;transform:scaleX(0.9975)">Trading</div>
<div class="t" style="left:391.52px;top:1141.38px;font-size:24px;line-height:24px;color:#808080;transform:scaleX(1.0045)">Ticks</div>
<div style="position:absolute;left:252px;top:1142px;width:2px;height:30px;background:#707070;"></div>
<div style="position:absolute;left:372px;top:1142px;width:2px;height:30px;background:#707070;"></div>
<div style="position:absolute;left:2px;top:1192px;width:2086px;height:2px;background:#a0a0a0;"></div>
<svg style="position:absolute;left:526px;top:164px;overflow:visible" width="1056" height="1020" viewBox="0 0 1056 1020" shape-rendering="crispEdges"><rect x="0" y="0" width="1056" height="1020" fill="#000"/><rect x="6" y="858" width="4" height="58" fill="#fff"/><rect x="8" y="858" width="2" height="58" fill="#00ff00"/><rect x="6" y="858" width="4" height="2" fill="#00ff00"/><rect x="6" y="914" width="4" height="2" fill="#00ff00"/><rect x="20" y="870" width="2" height="48" fill="#00ff00"/><rect x="16" y="880" width="10" height="38" fill="#00ff00"/><rect x="18" y="882" width="6" height="34" fill="#000"/><rect x="36" y="828" width="2" height="58" fill="#00ff00"/><rect x="32" y="832" width="10" height="50" fill="#00ff00"/><rect x="34" y="834" width="6" height="46" fill="#000"/><rect x="52" y="776" width="2" height="58" fill="#00ff00"/><rect x="48" y="776" width="10" height="58" fill="#00ff00"/><rect x="50" y="778" width="6" height="54" fill="#000"/><rect x="68" y="722" width="2" height="76" fill="#00ff00"/><rect x="64" y="726" width="10" height="52" fill="#00ff00"/><rect x="66" y="728" width="6" height="48" fill="#000"/><rect x="84" y="702" width="2" height="42" fill="#00ff00"/><rect x="80" y="704" width="10" height="26" fill="#00ff00"/><rect x="82" y="706" width="6" height="22" fill="#000"/><rect x="100" y="672" width="2" height="46" fill="#00ff00"/><rect x="96" y="686" width="10" height="20" fill="#00ff00"/><rect x="98" y="688" width="6" height="16" fill="#000"/><rect x="116" y="688" width="2" height="32" fill="#00ff00"/><rect x="112" y="688" width="10" height="6" fill="#00ff00"/><rect x="114" y="690" width="6" height="2" fill="#fff"/><rect x="132" y="644" width="2" height="66" fill="#00ff00"/><rect x="128" y="692" width="10" height="10" fill="#00ff00"/><rect x="130" y="694" width="6" height="6" fill="#fff"/><rect x="148" y="692" width="2" height="24" fill="#00ff00"/><rect x="144" y="698" width="10" height="6" fill="#00ff00"/><rect x="146" y="700" width="6" height="2" fill="#fff"/><rect x="164" y="632" width="2" height="80" fill="#00ff00"/><rect x="160" y="666" width="10" height="38" fill="#00ff00"/><rect x="162" y="668" width="6" height="34" fill="#000"/><rect x="180" y="648" width="2" height="38" fill="#00ff00"/><rect x="176" y="662" width="10" height="6" fill="#00ff00"/><rect x="178" y="664" width="6" height="2" fill="#000"/><rect x="196" y="656" width="2" height="22" fill="#00ff00"/><rect x="192" y="662" width="10" height="4" fill="#00ff00"/><rect x="212" y="604" width="2" height="68" fill="#00ff00"/><rect x="208" y="614" width="10" height="52" fill="#00ff00"/><rect x="210" y="616" width="6" height="48" fill="#000"/><rect x="228" y="596" width="2" height="32" fill="#00ff00"/><rect x="224" y="608" width="10" height="8" fill="#00ff00"/><rect x="226" y="610" width="6" height="4" fill="#000"/><rect x="244" y="550" width="2" height="60" fill="#00ff00"/><rect x="240" y="560" width="10" height="50" fill="#00ff00"/><rect x="242" y="562" width="6" height="46" fill="#000"/><rect x="260" y="544" width="2" height="60" fill="#00ff00"/><rect x="256" y="558" width="10" height="38" fill="#00ff00"/><rect x="258" y="560" width="6" height="34" fill="#fff"/><rect x="276" y="562" width="2" height="46" fill="#00ff00"/><rect x="272" y="590" width="10" height="6" fill="#00ff00"/><rect x="274" y="592" width="6" height="2" fill="#000"/><rect x="292" y="540" width="2" height="96" fill="#00ff00"/><rect x="288" y="590" width="10" height="36" fill="#00ff00"/><rect x="290" y="592" width="6" height="32" fill="#fff"/><rect x="308" y="598" width="2" height="44" fill="#00ff00"/><rect x="304" y="624" width="10" height="14" fill="#00ff00"/><rect x="306" y="626" width="6" height="10" fill="#fff"/><rect x="324" y="616" width="2" height="48" fill="#00ff00"/><rect x="320" y="626" width="10" height="12" fill="#00ff00"/><rect x="322" y="628" width="6" height="8" fill="#000"/><rect x="340" y="582" width="2" height="72" fill="#00ff00"/><rect x="336" y="592" width="10" height="36" fill="#00ff00"/><rect x="338" y="594" width="6" height="32" fill="#000"/><rect x="356" y="580" width="2" height="62" fill="#00ff00"/><rect x="352" y="590" width="10" height="26" fill="#00ff00"/><rect x="354" y="592" width="6" height="22" fill="#fff"/><rect x="372" y="580" width="2" height="88" fill="#00ff00"/><rect x="368" y="580" width="10" height="36" fill="#00ff00"/><rect x="370" y="582" width="6" height="32" fill="#000"/><rect x="388" y="398" width="2" height="192" fill="#00ff00"/><rect x="384" y="448" width="10" height="134" fill="#00ff00"/><rect x="386" y="450" width="6" height="130" fill="#000"/><rect x="404" y="410" width="2" height="76" fill="#00ff00"/><rect x="400" y="426" width="10" height="24" fill="#00ff00"/><rect x="402" y="428" width="6" height="20" fill="#000"/><rect x="420" y="396" width="2" height="44" fill="#00ff00"/><rect x="416" y="398" width="10" height="30" fill="#00ff00"/><rect x="418" y="400" width="6" height="26" fill="#000"/><rect x="436" y="378" width="2" height="42" fill="#00ff00"/><rect x="432" y="378" width="10" height="24" fill="#00ff00"/><rect x="434" y="380" width="6" height="20" fill="#000"/><rect x="452" y="328" width="2" height="56" fill="#00ff00"/><rect x="448" y="350" width="10" height="30" fill="#00ff00"/><rect x="450" y="352" width="6" height="26" fill="#000"/><rect x="468" y="320" width="2" height="48" fill="#00ff00"/><rect x="464" y="336" width="10" height="14" fill="#00ff00"/><rect x="466" y="338" width="6" height="10" fill="#000"/><rect x="484" y="322" width="2" height="28" fill="#00ff00"/><rect x="480" y="332" width="10" height="6" fill="#00ff00"/><rect x="482" y="334" width="6" height="2" fill="#000"/><rect x="500" y="326" width="2" height="50" fill="#00ff00"/><rect x="496" y="336" width="10" height="4" fill="#00ff00"/><rect x="516" y="312" width="2" height="26" fill="#00ff00"/><rect x="512" y="326" width="10" height="12" fill="#00ff00"/><rect x="514" y="328" width="6" height="8" fill="#000"/><rect x="532" y="316" width="2" height="24" fill="#00ff00"/><rect x="528" y="324" width="10" height="4" fill="#00ff00"/><rect x="548" y="314" width="2" height="46" fill="#00ff00"/><rect x="544" y="322" width="10" height="26" fill="#00ff00"/><rect x="546" y="324" width="6" height="22" fill="#fff"/><rect x="564" y="314" width="2" height="36" fill="#00ff00"/><rect x="560" y="326" width="10" height="22" fill="#00ff00"/><rect x="562" y="328" width="6" height="18" fill="#000"/><rect x="580" y="316" width="2" height="74" fill="#00ff00"/><rect x="576" y="326" width="10" height="58" fill="#00ff00"/><rect x="578" y="328" width="6" height="54" fill="#fff"/><rect x="596" y="364" width="2" height="26" fill="#00ff00"/><rect x="592" y="382" width="10" height="6" fill="#00ff00"/><rect x="594" y="384" width="6" height="2" fill="#fff"/><rect x="612" y="364" width="2" height="28" fill="#00ff00"/><rect x="608" y="376" width="10" height="12" fill="#00ff00"/><rect x="610" y="378" width="6" height="8" fill="#000"/><rect x="628" y="372" width="2" height="32" fill="#00ff00"/><rect x="624" y="376" width="10" height="6" fill="#00ff00"/><rect x="626" y="378" width="6" height="2" fill="#fff"/><rect x="644" y="346" width="2" height="48" fill="#00ff00"/><rect x="640" y="352" width="10" height="28" fill="#00ff00"/><rect x="642" y="354" width="6" height="24" fill="#000"/><rect x="660" y="314" width="2" height="98" fill="#00ff00"/><rect x="656" y="316" width="10" height="38" fill="#00ff00"/><rect x="658" y="318" width="6" height="34" fill="#000"/><rect x="676" y="304" width="2" height="70" fill="#00ff00"/><rect x="672" y="316" width="10" height="46" fill="#00ff00"/><rect x="674" y="318" width="6" height="42" fill="#fff"/><rect x="692" y="348" width="2" height="44" fill="#00ff00"/><rect x="688" y="360" width="10" height="28" fill="#00ff00"/><rect x="690" y="362" width="6" height="24" fill="#fff"/><rect x="708" y="342" width="2" height="48" fill="#00ff00"/><rect x="704" y="346" width="10" height="42" fill="#00ff00"/><rect x="706" y="348" width="6" height="38" fill="#000"/><rect x="724" y="318" width="2" height="64" fill="#00ff00"/><rect x="720" y="346" width="10" height="8" fill="#00ff00"/><rect x="722" y="348" width="6" height="4" fill="#fff"/><rect x="740" y="244" width="2" height="114" fill="#00ff00"/><rect x="736" y="244" width="10" height="112" fill="#00ff00"/><rect x="738" y="246" width="6" height="108" fill="#000"/><rect x="756" y="202" width="2" height="82" fill="#00ff00"/><rect x="752" y="222" width="10" height="24" fill="#00ff00"/><rect x="754" y="224" width="6" height="20" fill="#000"/><rect x="772" y="130" width="2" height="148" fill="#00ff00"/><rect x="768" y="162" width="10" height="62" fill="#00ff00"/><rect x="770" y="164" width="6" height="58" fill="#000"/><rect x="788" y="160" width="2" height="80" fill="#00ff00"/><rect x="784" y="162" width="10" height="42" fill="#00ff00"/><rect x="786" y="164" width="6" height="38" fill="#fff"/><rect x="804" y="116" width="2" height="94" fill="#00ff00"/><rect x="800" y="142" width="10" height="58" fill="#00ff00"/><rect x="802" y="144" width="6" height="54" fill="#000"/><rect x="820" y="130" width="2" height="52" fill="#00ff00"/><rect x="816" y="134" width="10" height="10" fill="#00ff00"/><rect x="818" y="136" width="6" height="6" fill="#000"/><rect x="836" y="96" width="2" height="42" fill="#00ff00"/><rect x="832" y="106" width="10" height="30" fill="#00ff00"/><rect x="834" y="108" width="6" height="26" fill="#000"/><rect x="852" y="64" width="2" height="52" fill="#00ff00"/><rect x="848" y="82" width="10" height="26" fill="#00ff00"/><rect x="850" y="84" width="6" height="22" fill="#000"/><rect x="868" y="46" width="2" height="42" fill="#00ff00"/><rect x="864" y="60" width="10" height="22" fill="#00ff00"/><rect x="866" y="62" width="6" height="18" fill="#000"/><rect x="884" y="54" width="2" height="78" fill="#00ff00"/><rect x="880" y="58" width="10" height="10" fill="#00ff00"/><rect x="882" y="60" width="6" height="6" fill="#000"/><rect x="900" y="52" width="2" height="26" fill="#00ff00"/><rect x="896" y="56" width="10" height="4" fill="#00ff00"/><rect x="916" y="38" width="2" height="32" fill="#00ff00"/><rect x="912" y="58" width="10" height="8" fill="#00ff00"/><rect x="914" y="60" width="6" height="4" fill="#fff"/><rect x="932" y="32" width="2" height="46" fill="#00ff00"/><rect x="928" y="62" width="10" height="2" fill="#00ff00"/><rect x="948" y="60" width="2" height="58" fill="#00ff00"/><rect x="944" y="62" width="10" height="44" fill="#00ff00"/><rect x="946" y="64" width="6" height="40" fill="#fff"/><rect x="4" y="4" width="2" height="984" fill="#fff"/><rect x="4" y="4" width="968" height="2" fill="#fff"/><rect x="970" y="4" width="2" height="976" fill="#fff"/><rect x="4" y="978" width="968" height="2" fill="#fff"/><rect x="132" y="980" width="2" height="8" fill="#fff"/><rect x="260" y="980" width="2" height="8" fill="#fff"/><rect x="388" y="980" width="2" height="8" fill="#fff"/><rect x="516" y="980" width="2" height="8" fill="#fff"/><rect x="644" y="980" width="2" height="8" fill="#fff"/><rect x="772" y="980" width="2" height="8" fill="#fff"/><rect x="900" y="980" width="2" height="8" fill="#fff"/><rect x="972" y="66" width="8" height="2" fill="#fff"/><rect x="972" y="132" width="8" height="2" fill="#fff"/><rect x="972" y="196" width="8" height="2" fill="#fff"/><rect x="972" y="262" width="8" height="2" fill="#fff"/><rect x="972" y="326" width="8" height="2" fill="#fff"/><rect x="972" y="392" width="8" height="2" fill="#fff"/><rect x="972" y="456" width="8" height="2" fill="#fff"/><rect x="972" y="522" width="8" height="2" fill="#fff"/><rect x="972" y="588" width="8" height="2" fill="#fff"/><rect x="972" y="652" width="8" height="2" fill="#fff"/><rect x="972" y="718" width="8" height="2" fill="#fff"/><rect x="972" y="782" width="8" height="2" fill="#fff"/><rect x="972" y="848" width="8" height="2" fill="#fff"/><rect x="972" y="912" width="8" height="2" fill="#fff"/></svg>
<svg style="position:absolute;left:540px;top:180px;overflow:visible" width="30" height="22" viewBox="0 0 30 22" ><rect x="1" y="1" width="28" height="20" fill="#fff" stroke="#d03030" stroke-width="2"/>
<path d="M15 1 H29 V21 H15" fill="none" stroke="#1058a0" stroke-width="2"/>
<rect x="3" y="3" width="11" height="16" fill="#ffd8d0"/><rect x="16" y="3" width="11" height="16" fill="#c0e0ff"/>
<path d="M4 5 H13 M4 11 H13 M4 17 H13" stroke="#d83030" stroke-width="2"/><path d="M17 5 H26 M17 11 H26 M17 17 H26" stroke="#1058a0" stroke-width="2"/></svg>
<div class="t" style="left:579.77px;top:180.87px;font-size:20px;line-height:20px;color:#fff;-webkit-text-stroke:0.3px #fff;transform:scaleX(0.9569)">EURUSD, H1:  Euro vs US Dollar</div>
<div class="t" style="left:1508.33px;top:222.09px;font-size:19.5px;line-height:19.5px;color:#fff;-webkit-text-stroke:0.35px #fff;transform:scaleX(0.9344)">1.11270</div>
<div class="t" style="left:1508.30px;top:288.09px;font-size:19.5px;line-height:19.5px;color:#fff;-webkit-text-stroke:0.35px #fff;transform:scaleX(0.9568)">1.11165</div>
<div class="t" style="left:1508.33px;top:352.09px;font-size:19.5px;line-height:19.5px;color:#fff;-webkit-text-stroke:0.35px #fff;transform:scaleX(0.9344)">1.11060</div>
<div class="t" style="left:1508.36px;top:418.09px;font-size:19.5px;line-height:19.5px;color:#fff;-webkit-text-stroke:0.35px #fff;transform:scaleX(0.9158)">1.10955</div>
<div class="t" style="left:1508.36px;top:482.09px;font-size:19.5px;line-height:19.5px;color:#fff;-webkit-text-stroke:0.35px #fff;transform:scaleX(0.9144)">1.10850</div>
<div class="t" style="left:1508.36px;top:548.09px;font-size:19.5px;line-height:19.5px;color:#fff;-webkit-text-stroke:0.35px #fff;transform:scaleX(0.9158)">1.10745</div>
<div class="t" style="left:1508.36px;top:612.09px;font-size:19.5px;line-height:19.5px;color:#fff;-webkit-text-stroke:0.35px #fff;transform:scaleX(0.9144)">1.10640</div>
<div class="t" style="left:1508.36px;top:678.09px;font-size:19.5px;line-height:19.5px;color:#fff;-webkit-text-stroke:0.35px #fff;transform:scaleX(0.9158)">1.10535</div>
<div class="t" style="left:1508.36px;top:744.09px;font-size:19.5px;line-height:19.5px;color:#fff;-webkit-text-stroke:0.35px #fff;transform:scaleX(0.9144)">1.10430</div>
<div class="t" style="left:1508.36px;top:808.09px;font-size:19.5px;line-height:19.5px;color:#fff;-webkit-text-stroke:0.35px #fff;transform:scaleX(0.9158)">1.10325</div>
<div class="t" style="left:1508.36px;top:874.09px;font-size:19.5px;line-height:19.5px;color:#fff;-webkit-text-stroke:0.35px #fff;transform:scaleX(0.9144)">1.10220</div>
<div class="t" style="left:1508.33px;top:938.09px;font-size:19.5px;line-height:19.5px;color:#fff;-webkit-text-stroke:0.35px #fff;transform:scaleX(0.9358)">1.10115</div>
<div class="t" style="left:1508.36px;top:1004.09px;font-size:19.5px;line-height:19.5px;color:#fff;-webkit-text-stroke:0.35px #fff;transform:scaleX(0.9144)">1.10010</div>
<div class="t" style="left:1508.36px;top:1068.09px;font-size:19.5px;line-height:19.5px;color:#fff;-webkit-text-stroke:0.35px #fff;transform:scaleX(0.9158)">1.09905</div>
<div class="t" style="left:530.08px;top:1152.49px;font-size:19.5px;line-height:19.5px;color:#fff;-webkit-text-stroke:0.35px #fff;transform:scaleX(0.9717)">16 Aug 2024</div>
<div class="t" style="left:658.28px;top:1152.49px;font-size:19.5px;line-height:19.5px;color:#fff;-webkit-text-stroke:0.35px #fff;transform:scaleX(0.9707)">19 Aug 01:00</div>
<div class="t" style="left:786.28px;top:1152.49px;font-size:19.5px;line-height:19.5px;color:#fff;-webkit-text-stroke:0.35px #fff;transform:scaleX(0.9707)">19 Aug 09:00</div>
<div class="t" style="left:914.28px;top:1152.49px;font-size:19.5px;line-height:19.5px;color:#fff;-webkit-text-stroke:0.35px #fff;transform:scaleX(0.9707)">19 Aug 17:00</div>
<div class="t" style="left:1042.76px;top:1152.49px;font-size:19.5px;line-height:19.5px;color:#fff;-webkit-text-stroke:0.35px #fff;transform:scaleX(0.9665)">20 Aug 01:00</div>
<div class="t" style="left:1170.76px;top:1152.49px;font-size:19.5px;line-height:19.5px;color:#fff;-webkit-text-stroke:0.35px #fff;transform:scaleX(0.9665)">20 Aug 09:00</div>
<div class="t" style="left:1298.76px;top:1152.49px;font-size:19.5px;line-height:19.5px;color:#fff;-webkit-text-stroke:0.35px #fff;transform:scaleX(0.9665)">20 Aug 17:00</div>
<div class="t" style="left:1426.76px;top:1152.49px;font-size:19.5px;line-height:19.5px;color:#fff;-webkit-text-stroke:0.35px #fff;transform:scaleX(0.9665)">21 Aug 01:00</div>
<div style="position:absolute;left:518px;top:166px;width:8px;height:1026px;background:#f0f0f0;"></div>
<div style="position:absolute;left:1582px;top:166px;width:506px;height:1026px;background:#f0f0f0;"></div>
<div style="position:absolute;left:1592px;top:156px;width:498px;height:1028px;background:#fff;"></div>
<div style="position:absolute;left:1602px;top:166px;width:478px;height:34px;background:#9ab4d2;"></div>
<div style="position:absolute;left:1602px;top:200px;width:478px;height:4px;background:#f0f0f0;"></div>
<div style="position:absolute;left:1602px;top:204px;width:478px;height:930px;background:#fff;"></div>
<div class="t" style="left:1606.40px;top:173.40px;font-size:21.5px;line-height:21.5px;color:#000;transform:scaleX(1.1047)">Navigator</div>
<svg style="position:absolute;left:2060px;top:176px;overflow:visible" width="16" height="14" viewBox="0 0 16 14" ><path d="M1.5 1 L14.500 13 M14.500 1 L1.5 13" stroke="#000" stroke-width="3" fill="none"/></svg>
<div style="position:absolute;left:1624px;top:244px;width:2px;height:42px;background:repeating-linear-gradient(to bottom,#555 0 2px,transparent 2px 4px)"></div>
<div style="position:absolute;left:1628px;top:264px;width:18px;height:2px;background:repeating-linear-gradient(to right,#555 0 2px,transparent 2px 4px)"></div>
<div style="position:absolute;left:1624px;top:320px;width:2px;height:6px;background:repeating-linear-gradient(to bottom,#555 0 2px,transparent 2px 4px)"></div>
<div style="position:absolute;left:1640px;top:304px;width:6px;height:2px;background:repeating-linear-gradient(to right,#555 0 2px,transparent 2px 4px)"></div>
<div style="position:absolute;left:1624px;top:360px;width:2px;height:6px;background:repeating-linear-gradient(to bottom,#555 0 2px,transparent 2px 4px)"></div>
<div style="position:absolute;left:1640px;top:344px;width:6px;height:2px;background:repeating-linear-gradient(to right,#555 0 2px,transparent 2px 4px)"></div>
<div style="position:absolute;left:1624px;top:400px;width:2px;height:46px;background:repeating-linear-gradient(to bottom,#555 0 2px,transparent 2px 4px)"></div>
<div style="position:absolute;left:1640px;top:384px;width:6px;height:2px;background:repeating-linear-gradient(to right,#555 0 2px,transparent 2px 4px)"></div>
<div style="position:absolute;left:1628px;top:424px;width:18px;height:2px;background:repeating-linear-gradient(to right,#555 0 2px,transparent 2px 4px)"></div>
<div style="position:absolute;left:1640px;top:464px;width:6px;height:2px;background:repeating-linear-gradient(to right,#555 0 2px,transparent 2px 4px)"></div>
<svg style="position:absolute;left:1617px;top:296px;overflow:visible" width="12" height="18" viewBox="0 0 12 18" ><path d="M1.5 1.5 L9.5 9 L1.5 16.500" fill="none" stroke="#9a9a9a" stroke-width="2.2"/></svg>
<svg style="position:absolute;left:1617px;top:336px;overflow:visible" width="12" height="18" viewBox="0 0 12 18" ><path d="M1.5 1.5 L9.5 9 L1.5 16.500" fill="none" stroke="#9a9a9a" stroke-width="2.2"/></svg>
<svg style="position:absolute;left:1617px;top:376px;overflow:visible" width="12" height="18" viewBox="0 0 12 18" ><path d="M1.5 1.5 L9.5 9 L1.5 16.500" fill="none" stroke="#9a9a9a" stroke-width="2.2"/></svg>
<svg style="position:absolute;left:1617px;top:456px;overflow:visible" width="12" height="18" viewBox="0 0 12 18" ><path d="M1.5 1.5 L9.5 9 L1.5 16.500" fill="none" stroke="#9a9a9a" stroke-width="2.2"/></svg>
<svg style="position:absolute;left:1609px;top:208px;overflow:visible" width="30" height="30" viewBox="0 0 30 30" ><polygon points="5,0.5 11,0.5 12.5,3 8.5,6.5 12,11 15,13 15,21.5 10,21 8,16 1,12 1,4" fill="#0878d8" stroke="#0878d8" stroke-width="1" stroke-linejoin="round"/>
<polygon points="10,6.5 17,1 24,0.5 29,4 29,17 25,17.5 25,9 21,7.5 16,10 10,10" fill="#fcc800" stroke="#fcc800" stroke-width="1" stroke-linejoin="round"/>
<polygon points="17,10.5 23,10.5 23,24 15,30 7,25 7,21.5 12,23.5 17,22" fill="#00a020" stroke="#00a020" stroke-width="1" stroke-linejoin="round"/></svg>
<svg style="position:absolute;left:1652px;top:250px;overflow:visible" width="30" height="28" viewBox="0 0 30 28" ><g fill="#c0e0ff" stroke="#1868b0" stroke-width="2.2"><circle cx="9" cy="10" r="4.500"/><path d="M1.2 27 V22 Q1.2 18 6 18 H8"/>
<circle cx="19" cy="8" r="6.5"/><path d="M8 27 V23 Q8 18.500 13 18.500 H25 Q29 18.500 29 23 V27Z"/></g></svg>
<svg style="position:absolute;left:1653px;top:292px;overflow:visible" width="28" height="24" viewBox="0 0 28 24" ><path d="M1 15 L11 12.500 M17 9 L27 6.500" fill="none" stroke="#20a830" stroke-width="2.4"/>
<polyline points="1,21 5,16 8,6.5 11,5.5 14,11 17,17 20,16 23,8 26,1" fill="none" stroke="#1868b0" stroke-width="2.2" stroke-linejoin="round"/></svg>
<svg style="position:absolute;left:1652px;top:332px;overflow:visible" width="30" height="26" viewBox="0 0 30 26" ><path d="M7.3 9 V17.500 Q15 21.500 22.700 17.500 V9" fill="#c0e0ff" stroke="#1868b0" stroke-width="2.2"/>
<path d="M1.2 5.2 L15 1 L28.800 5.2 L15 9.800Z" fill="#c0e0ff" stroke="#1868b0" stroke-width="2.2" stroke-linejoin="round"/>
<path d="M3.2 6 V19" stroke="#1868b0" stroke-width="2.2"/><rect x="0.3" y="18" width="5.6" height="5.6" rx="1.5" fill="#1868b0"/></svg>
<svg style="position:absolute;left:1654px;top:372px;overflow:visible" width="24" height="22" viewBox="0 0 24 22" ><rect x="5" y="1" width="16" height="19.500" fill="#fcd000" stroke="#c88c08" stroke-width="2"/>
<rect x="1" y="15" width="14" height="5.5" fill="#fcd000" stroke="#c88c08" stroke-width="2"/></svg>
<svg style="position:absolute;left:1654px;top:408px;overflow:visible" width="26" height="30" viewBox="0 0 26 30" ><polygon points="11.4,0.9 14.6,0.9 17.4,6.7 23.4,6.5 25.0,9.5 21.8,15.0 25.0,20.5 23.4,23.5 17.4,23.3 14.6,29.1 11.4,29.1 8.6,23.3 2.6,23.5 1.0,20.5 4.2,15.0 1.0,9.5 2.6,6.5 8.6,6.7" fill="#c0e0ff" stroke="#1868b0" stroke-width="2" stroke-linejoin="round"/>
<path d="M10.500 10.500 L17.500 15 L10.500 19.500Z" fill="#fff" stroke="#1868b0" stroke-width="2.2" stroke-linejoin="round"/></svg>
<svg style="position:absolute;left:1656px;top:450px;overflow:visible" width="22" height="26" viewBox="0 0 22 26" ><path d="M2.5 7 H19.500 L21.200 25.200 H0.8Z" fill="#fcd000" stroke="#d09810" stroke-width="1.6"/><path d="M2.5 8 L1.5 24.500 H3.800 L4.500 8Z" fill="#e8b408"/>
<path d="M7 11.500 V4 Q7 1 11 1 Q15 1 15 4 V11.500" fill="none" stroke="#c8900c" stroke-width="2"/></svg>
<div class="t" style="left:1650.42px;top:211.38px;font-size:24px;line-height:24px;color:#000;transform:scaleX(0.9802)">MetaTrader 5</div>
<div class="t" style="left:1694.50px;top:251.48px;font-size:24px;line-height:24px;color:#000;transform:scaleX(1.0141)">Accounts</div>
<div class="t" style="left:1692.80px;top:291.48px;font-size:24px;line-height:24px;color:#000;transform:scaleX(1.0194)">Indicators</div>
<div class="t" style="left:1693.14px;top:331.48px;font-size:24px;line-height:24px;color:#000;transform:scaleX(0.9668)">Expert Advisors</div>
<div class="t" style="left:1693.96px;top:371.48px;font-size:24px;line-height:24px;color:#000;transform:scaleX(0.9636)">Scripts</div>
<div class="t" style="left:1694.01px;top:411.48px;font-size:24px;line-height:24px;color:#000;transform:scaleX(0.9210)">Services</div>
<div class="t" style="left:1693.04px;top:451.48px;font-size:24px;line-height:24px;color:#000;transform:scaleX(1.0199)">Market</div>
<div style="position:absolute;left:1602px;top:1136px;width:478px;height:38px;background:#f0f0f0;"></div>
<div style="position:absolute;left:1602px;top:1134px;width:10px;height:2px;background:#000;"></div>
<div style="position:absolute;left:1750px;top:1134px;width:330px;height:2px;background:#000;"></div>
<div style="position:absolute;left:1610px;top:1134px;width:142px;height:38px;background:#fff;"></div>
<div style="position:absolute;left:1610px;top:1134px;width:2px;height:40px;background:#000;"></div>
<div style="position:absolute;left:1750px;top:1134px;width:2px;height:40px;background:#000;"></div>
<div style="position:absolute;left:1610px;top:1172px;width:142px;height:2px;background:#000;"></div>
<div class="t" style="left:1630.24px;top:1141.48px;font-size:24px;line-height:24px;color:#000;transform:scaleX(1.0522)">Common</div>
<div class="t" style="left:1771.14px;top:1141.48px;font-size:24px;line-height:24px;color:#808080;transform:scaleX(0.9700)">Favorites</div>
<div style="position:absolute;left:2px;top:1194px;width:2086px;height:230px;background:#fff;"></div>
<div style="position:absolute;left:2px;top:1194px;width:32px;height:280px;background:#c0cddc;"></div>
<div style="position:absolute;left:34px;top:1194px;width:4px;height:232px;background:#f0f0f0;"></div>
<svg style="position:absolute;left:10px;top:1208px;overflow:visible" width="16" height="14" viewBox="0 0 16 14" ><path d="M1.5 1 L14.500 13 M14.500 1 L1.5 13" stroke="#000" stroke-width="3" fill="none"/></svg>
<div class="t" style="left:48.93px;top:1205.38px;font-size:24px;line-height:24px;color:#000;transform:scaleX(0.9868)">Subject</div>
<div class="t" style="left:1492.12px;top:1205.38px;font-size:24px;line-height:24px;color:#000;transform:scaleX(0.9809)">Category</div>
<div class="t" style="left:2031.79px;top:1205.38px;font-size:24px;line-height:24px;color:#000;transform:scaleX(1.0529)">Time</div>
<div style="position:absolute;left:1478px;top:1194px;width:2px;height:48px;background:#a0a0a0;"></div>
<div style="position:absolute;left:1816px;top:1194px;width:2px;height:48px;background:#a0a0a0;"></div>
<div style="position:absolute;left:5.1px;top:1464.6px;width:95px;height:25px;font-size:25px;line-height:25px;transform-origin:0 0;transform:rotate(-90deg) scaleX(0.9);white-space:pre;color:#000">Toolbox</div>
<div style="position:absolute;left:34px;top:1426px;width:2054px;height:48px;background:#f0f0f0;"></div>
<div style="position:absolute;left:38px;top:1424px;width:12px;height:2px;background:#000;"></div>
<div style="position:absolute;left:144px;top:1424px;width:1944px;height:2px;background:#000;"></div>
<div style="position:absolute;left:48px;top:1424px;width:98px;height:38px;background:#fff;"></div>
<div style="position:absolute;left:48px;top:1424px;width:2px;height:40px;background:#000;"></div>
<div style="position:absolute;left:144px;top:1424px;width:2px;height:40px;background:#000;"></div>
<div style="position:absolute;left:48px;top:1462px;width:98px;height:2px;background:#000;"></div>
<div style="position:absolute;left:50px;top:1464px;width:98px;height:2px;background:#a0a0a0;"></div>
<div style="position:absolute;left:146px;top:1428px;width:2px;height:38px;background:#a0a0a0;"></div>
<div class="t" style="left:67.81px;top:1431.38px;font-size:24px;line-height:24px;color:#000;transform:scaleX(0.9836)">News</div>
<div class="t" style="left:164.51px;top:1431.38px;font-size:24px;line-height:24px;color:#808080;transform:scaleX(1.0370)">Mailbox</div>
<div class="t" style="left:289.84px;top:1431.38px;font-size:24px;line-height:24px;color:#808080;transform:scaleX(0.9700)">Calendar</div>
<div class="t" style="left:425.00px;top:1431.38px;font-size:24px;line-height:24px;color:#808080;transform:scaleX(0.9755)">Alerts</div>
<div class="t" style="left:525.00px;top:1431.38px;font-size:24px;line-height:24px;color:#808080;transform:scaleX(0.9823)">Articles</div>
<div class="t" style="left:641.38px;top:1431.38px;font-size:24px;line-height:24px;color:#808080;transform:scaleX(0.9355)">Code Base</div>
<div class="t" style="left:790.70px;top:1431.38px;font-size:24px;line-height:24px;color:#808080;transform:scaleX(0.9351)">Experts</div>
<div class="t" style="left:905.65px;top:1431.38px;font-size:24px;line-height:24px;color:#808080;transform:scaleX(0.9831)">Journal</div>
<div style="position:absolute;left:270px;top:1432px;width:2px;height:30px;background:#707070;"></div>
<div style="position:absolute;left:404px;top:1432px;width:2px;height:30px;background:#707070;"></div>
<div style="position:absolute;left:505px;top:1432px;width:2px;height:30px;background:#707070;"></div>
<div style="position:absolute;left:623px;top:1432px;width:2px;height:30px;background:#707070;"></div>
<div style="position:absolute;left:773px;top:1432px;width:2px;height:30px;background:#707070;"></div>
<div style="position:absolute;left:887px;top:1432px;width:2px;height:30px;background:#707070;"></div>
<svg style="position:absolute;left:1604px;top:1436px;overflow:visible" width="22" height="26" viewBox="0 0 22 26" ><path d="M2.5 7 H19.500 L21.200 25.200 H0.8Z" fill="#fcd000" stroke="#d09810" stroke-width="1.6"/><path d="M2.5 8 L1.5 24.500 H3.800 L4.500 8Z" fill="#e8b408"/>
<path d="M7 11.500 V4 Q7 1 11 1 Q15 1 15 4 V11.500" fill="none" stroke="#c8900c" stroke-width="2"/></svg>
<div class="t" style="left:1637.05px;top:1437.48px;font-size:24px;line-height:24px;color:#000;transform:scaleX(1.0171)">Market</div>
<svg style="position:absolute;left:1738px;top:1439px;overflow:visible" width="29.92" height="21.12" viewBox="0 0 29.92 21.12" ><g transform="scale(0.88)" fill="none" stroke="#c4c4c4" stroke-width="2.2"><circle cx="17" cy="12" r="3.2"/>
<path d="M10.5 5.5 Q7 12 10.5 18.5 M23.5 5.5 Q27 12 23.5 18.5 M4.5 1.5 Q-1.5 12 4.5 22.5 M29.5 1.5 Q35.500 12 29.5 22.5"/></g></svg>
<div class="t" style="left:1775.47px;top:1437.48px;font-size:24px;line-height:24px;color:#a8a8a8;transform:scaleX(0.9570)">Signals</div>
<svg style="position:absolute;left:1875px;top:1436px;overflow:visible" width="31.28" height="27.6" viewBox="0 0 31.28 27.6" ><g transform="scale(0.92)"><path d="M8 19 Q1 19 1 13 Q1 8 7 8 Q9 1 16 1 Q24 1 25 8 Q33 8 33 14 Q33 19 26 19Z" fill="#dedede" stroke="#c4c4c4" stroke-width="2"/>
<path d="M17 19 V27 M1 27 H33" stroke="#c4c4c4" stroke-width="2.2" fill="none"/><circle cx="17" cy="27" r="2.4" fill="#c4c4c4"/></g></svg>
<div class="t" style="left:1914.90px;top:1437.48px;font-size:24px;line-height:24px;color:#a8a8a8;transform:scaleX(0.8333)">VPS</div>
<svg style="position:absolute;left:1980px;top:1434px;overflow:visible" width="30" height="30" viewBox="0 0 30 30" ><path d="M7.0 0 V5 M7.0 25 V30 M0 7.0 H5 M25 7.0 H30 M12.3 0 V5 M12.3 25 V30 M0 12.3 H5 M25 12.3 H30 M17.7 0 V5 M17.7 25 V30 M0 17.7 H5 M25 17.7 H30 M23.0 0 V5 M23.0 25 V30 M0 23.0 H5 M25 23.0 H30 " stroke="#0058a8" stroke-width="2"/><rect x="4.800" y="4.800" width="20.400" height="20.400" rx="4" fill="#c0e0ff" stroke="#0058a8" stroke-width="2.4"/></svg>
<div class="t" style="left:2018.55px;top:1437.48px;font-size:24px;line-height:24px;color:#000;transform:scaleX(0.9449)">Tester</div>
<div style="position:absolute;left:2px;top:1474px;width:2086px;height:2px;background:#a0a0a0;"></div>
<div style="position:absolute;left:2px;top:1476px;width:2086px;height:42px;background:#f0f0f0;"></div>
<div class="t" style="left:6.20px;top:1485.38px;font-size:24px;line-height:24px;color:#000;transform:scaleX(0.9350)">For Help, press F1</div>
<div class="t" style="left:723.08px;top:1485.38px;font-size:24px;line-height:24px;color:#000;transform:scaleX(1.0011)">Default</div>
<div class="t" style="left:978.91px;top:1485.38px;font-size:24px;line-height:24px;color:#000;transform:scaleX(0.9064)">2024.08.20 21:00</div>
<div class="t" style="left:1175.79px;top:1485.38px;font-size:24px;line-height:24px;color:#000;transform:scaleX(0.9375)">O: 1.11160</div>
<div class="t" style="left:1317.19px;top:1485.38px;font-size:24px;line-height:24px;color:#000;transform:scaleX(0.9407)">H: 1.11223</div>
<div class="t" style="left:1459.60px;top:1485.38px;font-size:24px;line-height:24px;color:#000;transform:scaleX(0.9362)">L: 1.11156</div>
<div class="t" style="left:1595.89px;top:1485.38px;font-size:24px;line-height:24px;color:#000;transform:scaleX(0.9215)">C: 1.11206</div>
<div class="t" style="left:1906.56px;top:1485.38px;font-size:24px;line-height:24px;color:#000;transform:scaleX(0.9782)">0 / 0 Kb</div>
<div style="position:absolute;left:712px;top:1480px;width:2px;height:36px;background:#a0a0a0;"></div>
<div style="position:absolute;left:968px;top:1480px;width:2px;height:36px;background:#a0a0a0;"></div>
<div style="position:absolute;left:1164px;top:1480px;width:2px;height:36px;background:#a0a0a0;"></div>
<div style="position:absolute;left:1306px;top:1480px;width:2px;height:36px;background:#a0a0a0;"></div>
<div style="position:absolute;left:1448px;top:1480px;width:2px;height:36px;background:#a0a0a0;"></div>
<div style="position:absolute;left:1584px;top:1480px;width:2px;height:36px;background:#a0a0a0;"></div>
<div style="position:absolute;left:1724px;top:1480px;width:2px;height:36px;background:#a0a0a0;"></div>
<div style="position:absolute;left:1856px;top:1480px;width:2px;height:36px;background:#a0a0a0;"></div>
<svg style="position:absolute;left:1874px;top:1487px;overflow:visible" width="19" height="19" viewBox="0 0 19 19" ><circle cx="9.5" cy="9.5" r="9.2" fill="#e03030"/><rect x="4" y="8.2" width="11" height="2.6" fill="#fff"/></svg>
<div style="position:absolute;left:2084px;top:1504px;width:2px;height:2px;background:#b0b0b0;"></div>
<div style="position:absolute;left:2080px;top:1508px;width:2px;height:2px;background:#b0b0b0;"></div>
<div style="position:absolute;left:2084px;top:1508px;width:2px;height:2px;background:#b0b0b0;"></div>
<div style="position:absolute;left:2076px;top:1512px;width:2px;height:2px;background:#b0b0b0;"></div>
<div style="position:absolute;left:2080px;top:1512px;width:2px;height:2px;background:#b0b0b0;"></div>
<div style="position:absolute;left:2084px;top:1512px;width:2px;height:2px;background:#b0b0b0;"></div>
<div style="position:absolute;left:1587px;top:151px;width:508px;height:1038px;box-sizing:border-box;border:10px solid #f39b21;border-radius:15.5px;box-shadow:0 0 0 5px #fff;"></div>
<div style="position:absolute;left:2090px;top:0px;width:10px;height:151px;background:#fff;"></div>
</body></html>
